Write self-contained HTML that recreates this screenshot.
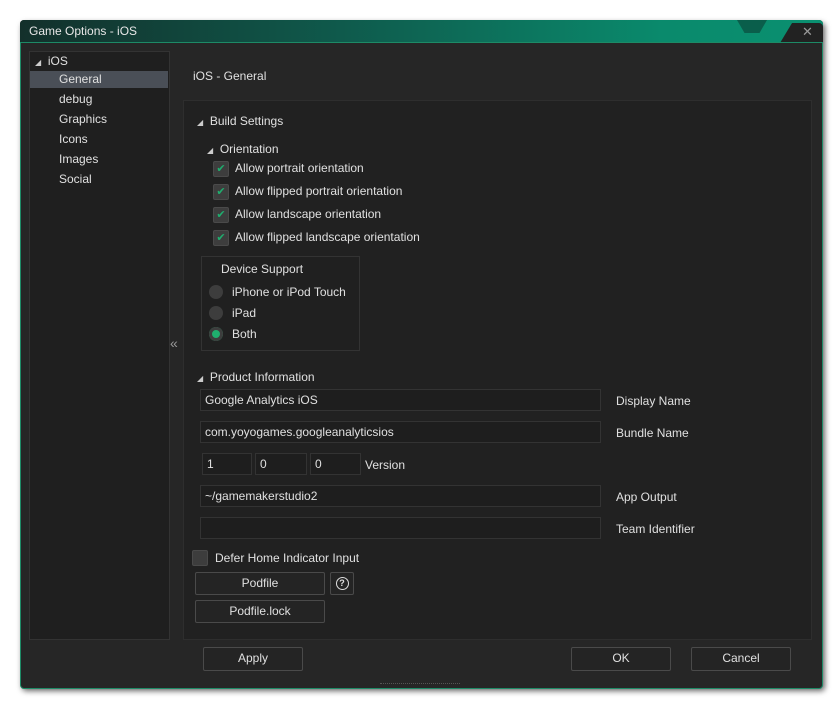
<!DOCTYPE html>
<html><head><style>
body{margin:0;width:840px;height:708px;background:#fff;position:relative;overflow:hidden;font-family:"Liberation Sans",sans-serif;font-size:12px;color:#e0e0e0}
.a{position:absolute}
.win{left:20px;top:20px;width:803px;height:668px;background:#262626;border-radius:4px;box-shadow:2px 3px 6px rgba(0,0,0,.6)}
.tb{left:20px;top:20px;width:803px;height:23px;border-radius:4px 4px 0 0;background:linear-gradient(90deg,#13302b 0%,#0f5a4c 40%,#0a8a6c 80%,#0a9070 100%)}
.body{left:20px;top:42px;width:801px;height:645px;border:1px solid #1d8a66;border-radius:0 0 4px 4px;background:#262626}
.cb{width:14px;height:14px;background:#3d3d3d;border:1px solid #4a4a4a;border-radius:2px;color:#1fae6e;font-size:11px;line-height:14px;text-align:center}
.rd{width:14px;height:14px;border-radius:50%;background:#3d3d3d}
.inp{background:#1e1e1e;border:1px solid #333;height:22px;box-sizing:border-box;padding:3px 4px;font-size:12px}
.btn{border:1px solid #4a4a4a;background:#242424;text-align:center;box-sizing:border-box;border-radius:2px;line-height:21px}
.tri{font-size:8px;color:#ccc}
</style></head><body>
<div class="a win"></div>
<div class="a tb"></div>
<div class="a" style="left:780px;top:23px;width:43px;height:20px;background:#222;clip-path:polygon(28% 0,100% 0,100% 100%,0 100%);border-radius:0 4px 0 0"></div>
<div class="a" style="left:737px;top:20px;width:30px;height:13px;background:#0a5e4b;clip-path:polygon(0 0,100% 0,75% 100%,25% 100%)"></div>
<div class="a" style="left:29px;top:24px;color:#e8e8e8">Game Options - iOS</div>
<div class="a" style="left:802px;top:24px;color:#999;font-size:13px">✕</div>
<div class="a body"></div>
<div class="a" style="left:29px;top:51px;width:139px;height:587px;background:#1f1f1f;border:1px solid #333"></div>
<div class="a" style="left:30px;top:71px;width:138px;height:17px;background:#4a4f57"></div>
<div class="a" style="left:35px;top:54px"><span class="tri">◢</span>&nbsp; iOS</div>
<div class="a" style="left:59px;top:72px">General</div>
<div class="a" style="left:59px;top:92px">debug</div>
<div class="a" style="left:59px;top:112px">Graphics</div>
<div class="a" style="left:59px;top:132px">Icons</div>
<div class="a" style="left:59px;top:152px">Images</div>
<div class="a" style="left:59px;top:172px">Social</div>
<div class="a" style="left:170px;top:335px;color:#999;font-size:14px">«</div>
<div class="a" style="left:193px;top:69px">iOS - General</div>
<div class="a" style="left:183px;top:100px;width:627px;height:538px;background:#212121;border:1px solid #2e2e2e"></div>
<div class="a" style="left:197px;top:114px"><span class="tri">◢</span>&nbsp; Build Settings</div>
<div class="a" style="left:207px;top:142px"><span class="tri">◢</span>&nbsp; Orientation</div>
<div class="a cb" style="left:213px;top:161px">✔</div>
<div class="a" style="left:235px;top:161px">Allow portrait orientation</div>
<div class="a cb" style="left:213px;top:184px">✔</div>
<div class="a" style="left:235px;top:184px">Allow flipped portrait orientation</div>
<div class="a cb" style="left:213px;top:207px">✔</div>
<div class="a" style="left:235px;top:207px">Allow landscape orientation</div>
<div class="a cb" style="left:213px;top:230px">✔</div>
<div class="a" style="left:235px;top:230px">Allow flipped landscape orientation</div>
<div class="a" style="left:201px;top:256px;width:157px;height:93px;border:1px solid #333;background:#202020"></div>
<div class="a" style="left:221px;top:262px">Device Support</div>
<div class="a rd" style="left:209px;top:285px"></div><div class="a" style="left:232px;top:285px">iPhone or iPod Touch</div>
<div class="a rd" style="left:209px;top:306px"></div><div class="a" style="left:232px;top:306px">iPad</div>
<div class="a rd" style="left:209px;top:327px;box-shadow:inset 0 0 0 3px #3d3d3d;background:#1fae6e"></div><div class="a" style="left:232px;top:327px">Both</div>
<div class="a" style="left:197px;top:370px"><span class="tri">◢</span>&nbsp; Product Information</div>
<div class="a inp" style="left:200px;top:389px;width:401px">Google Analytics iOS</div><div class="a" style="left:616px;top:394px">Display Name</div>
<div class="a inp" style="left:200px;top:421px;width:401px">com.yoyogames.googleanalyticsios</div><div class="a" style="left:616px;top:426px">Bundle Name</div>
<div class="a inp" style="left:202px;top:453px;width:50px">1</div>
<div class="a inp" style="left:255px;top:453px;width:52px">0</div>
<div class="a inp" style="left:310px;top:453px;width:51px">0</div>
<div class="a" style="left:365px;top:458px">Version</div>
<div class="a inp" style="left:200px;top:485px;width:401px">~/gamemakerstudio2</div><div class="a" style="left:616px;top:490px">App Output</div>
<div class="a inp" style="left:200px;top:517px;width:401px"></div><div class="a" style="left:616px;top:522px">Team Identifier</div>
<div class="a cb" style="left:192px;top:550px"></div>
<div class="a" style="left:215px;top:551px">Defer Home Indicator Input</div>
<div class="a btn" style="left:195px;top:572px;width:130px;height:23px">Podfile</div>
<div class="a btn" style="left:330px;top:572px;width:24px;height:23px"><span style="display:inline-block;width:11px;height:11px;border:1px solid #ddd;border-radius:50%;line-height:11px;font-size:9px;font-weight:bold;vertical-align:middle">?</span></div>
<div class="a btn" style="left:195px;top:600px;width:130px;height:23px">Podfile.lock</div>
<div class="a btn" style="left:203px;top:647px;width:100px;height:24px">Apply</div>
<div class="a btn" style="left:571px;top:647px;width:100px;height:24px">OK</div>
<div class="a btn" style="left:691px;top:647px;width:100px;height:24px">Cancel</div>
<div class="a" style="left:380px;top:683px;width:80px;height:2px;border-top:1px dotted #555"></div>
</body></html>
